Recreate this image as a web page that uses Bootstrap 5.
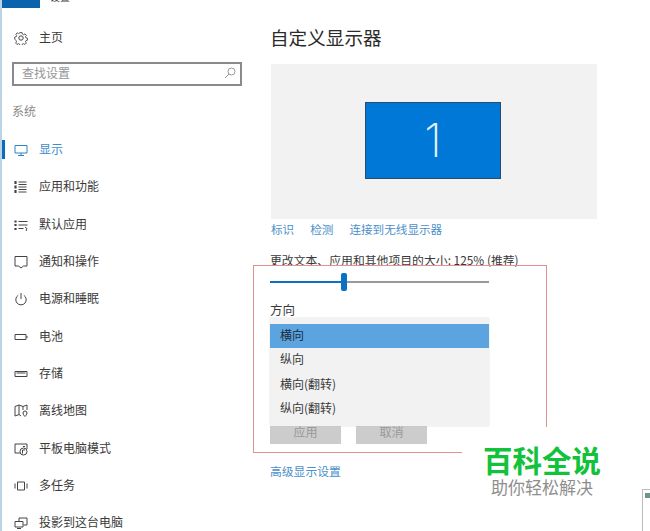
<!DOCTYPE html>
<html lang="zh-CN"><head><meta charset="utf-8"><title>设置</title>
<link rel="stylesheet" href="https://cdn.jsdelivr.net/npm/bootstrap@5.3.0/dist/css/bootstrap.min.css">
<style>
html,body{width:650px;height:531px;overflow:hidden;background:#fff}
body{font-family:"Noto Sans CJK SC","Liberation Sans",sans-serif;font-size:12px;color:#333;position:relative}
.side{width:253px;height:531px;border-left:2px solid #bcd3e4;flex:none}
.tophead{height:8px;overflow:hidden}
.tileblue{width:38px;height:8px;background:#0a64ad}
.toptext{margin:-9px 0 0 10px;font-size:10px;line-height:12px;color:#444}
.navrow{height:37.35px;color:#3a3a3a;line-height:16px;position:relative}
.navrow svg{width:14px;height:14px;margin:0 11px 0 12px;flex:none;fill:none;stroke:#444;stroke-width:1}
.navtxt{position:relative;top:-1px}
.navrow.now{color:#3f8ccb}
.navrow.now::before{content:"";position:absolute;left:0;top:9px;width:3px;height:19px;background:#0a6cc0}
.navrow.now svg{stroke:#2f82c6}
.homerow{margin-top:11.500px}
.findbox{width:230px;height:24px;margin:5.500px 0 0 10px;border:2px solid #8a8a8a;padding:0 4px 2px 8px;color:#969696}
.findbox svg{width:12px;height:12px;fill:none;stroke:#999;stroke-width:1}
.grouphead{margin:16px 0 11px 10px;color:#8a8a8a;line-height:18px}
.mainpane{padding:0 0 0 17px;width:345px;flex:none}
.pagehead{font-size:18.600px;font-weight:400;line-height:26px;margin:24px 0 14px 0;color:#2b2b2b}
.monitorbox{width:326px;height:155px;margin-left:1px;background:#f2f2f2;padding-top:38px}
.screen1{width:136px;height:77px;margin-left:94px;background:#0078d7;border:1px solid #2d4b68;color:#e8f4fc;font-family:"Inter","Liberation Sans",sans-serif;font-weight:200;font-size:46px;line-height:75px;text-align:center}
.linkrow{margin:1px 0 0 1px;font-size:11.600px;line-height:18px;gap:16px;color:#4b90c9}
.sizeline{margin-top:13px;font-size:11.850px;line-height:18px;color:#3a3a3a;white-space:nowrap}
.slidebar{width:219px;height:2px;margin-top:12px;background:#999;position:relative}
.slidefill{height:2px;width:72px;background:#0a70c4}
.slidethumb{position:absolute;left:71px;top:-8px;width:6px;height:18px;background:#0a70c4;border-radius:2px}
.dirhead{margin-top:18px;line-height:18px;font-size:12.500px;color:#3a3a3a}
.ghostwrap{margin-top:107px;gap:15px}
.ghostbtn{width:71px;height:18px;background:#ccc;color:#999;font-size:12px;line-height:12px;text-align:center;border-radius:0;padding:0 0 6px;border:0;display:block}
.dropmenu{position:absolute;left:270px;top:318px;width:219px;height:108px;background:#f2f2f2;box-shadow:0 0 1px #bbb;padding-top:6px;color:#3a3a3a;z-index:2}
.dropitem{height:24.400px;line-height:21px;padding-left:10px}
.dropitem.pick{background:#5ba4e0;color:#1c2c3c}
.moreline{margin-top:18px;color:#4b90c9;line-height:18px;font-size:11.800px}
.redframe{position:absolute;left:253px;top:265px;width:294px;height:188px;border:1px solid #e39090;z-index:1;pointer-events:none}
.brandbox{position:absolute;left:462px;top:427px;width:160px;height:78px;background:#fff;z-index:3;text-align:center;padding-top:17px}
.brandmain{font-size:29.500px;font-weight:700;line-height:30px;color:#12c23a;white-space:nowrap}
.brandsub{font-size:17px;line-height:20px;color:#8e8e8e;margin-top:3px;white-space:nowrap}
.cornerwin{position:absolute;left:642px;top:489px;width:20px;height:50px;background:#fff;border:1px solid #bbb;z-index:3}
.cornerwin i{display:block;width:5px;height:5px;margin:3px 0 0 2px;background:#6f9488}
</style></head><body>
<div class="d-flex">
<aside class="side">
  <div class="tophead d-flex"><div class="tileblue"></div><div class="toptext">设置</div></div>
  <div class="navrow homerow d-flex align-items-center"><svg viewBox="0 0 14 14"><circle cx="7" cy="7" r="2.200"/><path d="M5.800 1h2.400l.4 1.700 1.300.6 1.500-.9 1.500 1.600-.9 1.500.5 1.300 1.700.4v2.200l-1.700.5-.5 1.200.9 1.500-1.600 1.600-1.500-.9-1.300.5-.4 1.700H5.800l-.4-1.700-1.300-.5-1.500.9-1.500-1.600.9-1.500-.5-1.200L0 8.200V6l1.700-.4.5-1.300-.9-1.500 1.500-1.600 1.500.9 1.300-.6z" transform="translate(.7 .7) scale(.9)"/></svg><span class="navtxt">主页</span></div>
  <div class="findbox d-flex align-items-center justify-content-between"><span>查找设置</span><svg viewBox="0 0 12 12"><circle cx="7.500" cy="4.500" r="3.500"/><path d="M5 7 1 11"/></svg></div>
  <div class="grouphead">系统</div>
  <div class="navrow now d-flex align-items-center"><svg viewBox="0 0 14 14"><path d="M1 2.500h12v7.500H1zM7 10v2.500M4 12.500h6"/></svg><span class="navtxt">显示</span></div>
  <div class="navrow d-flex align-items-center"><svg viewBox="0 0 14 14"><path d="M1.500 1v3M1.500 5.500v3M1.500 10v3" stroke-width="2.200"/><path d="M4.500 2h8M4.500 4.500h8M4.500 7h8M4.500 9.500h8M4.500 12h8"/></svg><span class="navtxt">应用和功能</span></div>
  <div class="navrow d-flex align-items-center"><svg viewBox="0 0 14 14"><path d="M1.500 2.500v2M1.500 6v2M1.500 10v2" stroke-width="2.200"/><path d="M4.500 3.500h9M4.500 7h9M4.500 10.500h5M11 9l2 1.500-1 2.500"/></svg><span class="navtxt">默认应用</span></div>
  <div class="navrow d-flex align-items-center"><svg viewBox="0 0 14 14"><path d="M1 1.500h12v9.500H9.500L7 13 4.500 11H1z"/></svg><span class="navtxt">通知和操作</span></div>
  <div class="navrow d-flex align-items-center"><svg viewBox="0 0 14 14"><path d="M4.200 3.300a5.200 5.200 0 1 0 5.600 0M7 1v6"/></svg><span class="navtxt">电源和睡眠</span></div>
  <div class="navrow d-flex align-items-center"><svg viewBox="0 0 14 14"><path d="M1 4.500h11v5H1zM13 6v2"/></svg><span class="navtxt">电池</span></div>
  <div class="navrow d-flex align-items-center"><svg viewBox="0 0 14 14"><path d="M1 4.500h12v5H1zM2.500 6h9"/></svg><span class="navtxt">存储</span></div>
  <div class="navrow d-flex align-items-center"><svg viewBox="0 0 14 14"><path d="M1 2.500 5 1l4 1.500L13 1v5M1 2.500V12l4-1.500L7 12M5 1v9.500M9 2.500V6M11 7a2 2 0 0 1 2 2c0 1.500-2 3.500-2 3.500S9 10.500 9 9a2 2 0 0 1 2-2z"/></svg><span class="navtxt">离线地图</span></div>
  <div class="navrow d-flex align-items-center"><svg viewBox="0 0 14 14"><path d="M6 11H1V2h12v5M11 4.500H9"/><circle cx="9.500" cy="9.500" r="3.500"/><path d="M8.500 8v3.500M8.500 8h2.500"/></svg><span class="navtxt">平板电脑模式</span></div>
  <div class="navrow d-flex align-items-center"><svg viewBox="0 0 14 14"><path d="M3.500 3h7v8h-7zM1 4.500V9.500M13 4.500V9.500"/></svg><span class="navtxt">多任务</span></div>
  <div class="navrow d-flex align-items-center"><svg viewBox="0 0 14 14"><path d="M5 5V2h8v7H9.500M1 5.500h8V11H1zM3 12.500h4"/></svg><span class="navtxt">投影到这台电脑</span></div>
</aside>
<main class="mainpane">
  <h1 class="pagehead">自定义显示器</h1>
  <div class="monitorbox"><div class="screen1">1</div></div>
  <div class="linkrow d-flex"><span>标识</span><span>检测</span><span>连接到无线显示器</span></div>
  <div class="sizeline">更改文本、应用和其他项目的大小: 125% (推荐)</div>
  <div class="slidebar"><div class="slidefill"></div><div class="slidethumb"></div></div>
  <div class="dirhead">方向</div>
  <div class="ghostwrap d-flex"><button class="btn ghostbtn" type="button">应用</button><button class="btn ghostbtn" type="button">取消</button></div>
  <div class="moreline">高级显示设置</div>
</main>
</div>
<div class="dropmenu"><div class="dropitem pick">横向</div><div class="dropitem">纵向</div><div class="dropitem">横向(翻转)</div><div class="dropitem">纵向(翻转)</div></div>
<div class="redframe"></div>
<div class="brandbox"><div class="brandmain">百科全说</div><div class="brandsub">助你轻松解决</div></div>
<div class="cornerwin"><i></i></div>
<script src="https://cdn.jsdelivr.net/npm/bootstrap@5.3.0/dist/js/bootstrap.bundle.min.js"></script>
</body></html>
